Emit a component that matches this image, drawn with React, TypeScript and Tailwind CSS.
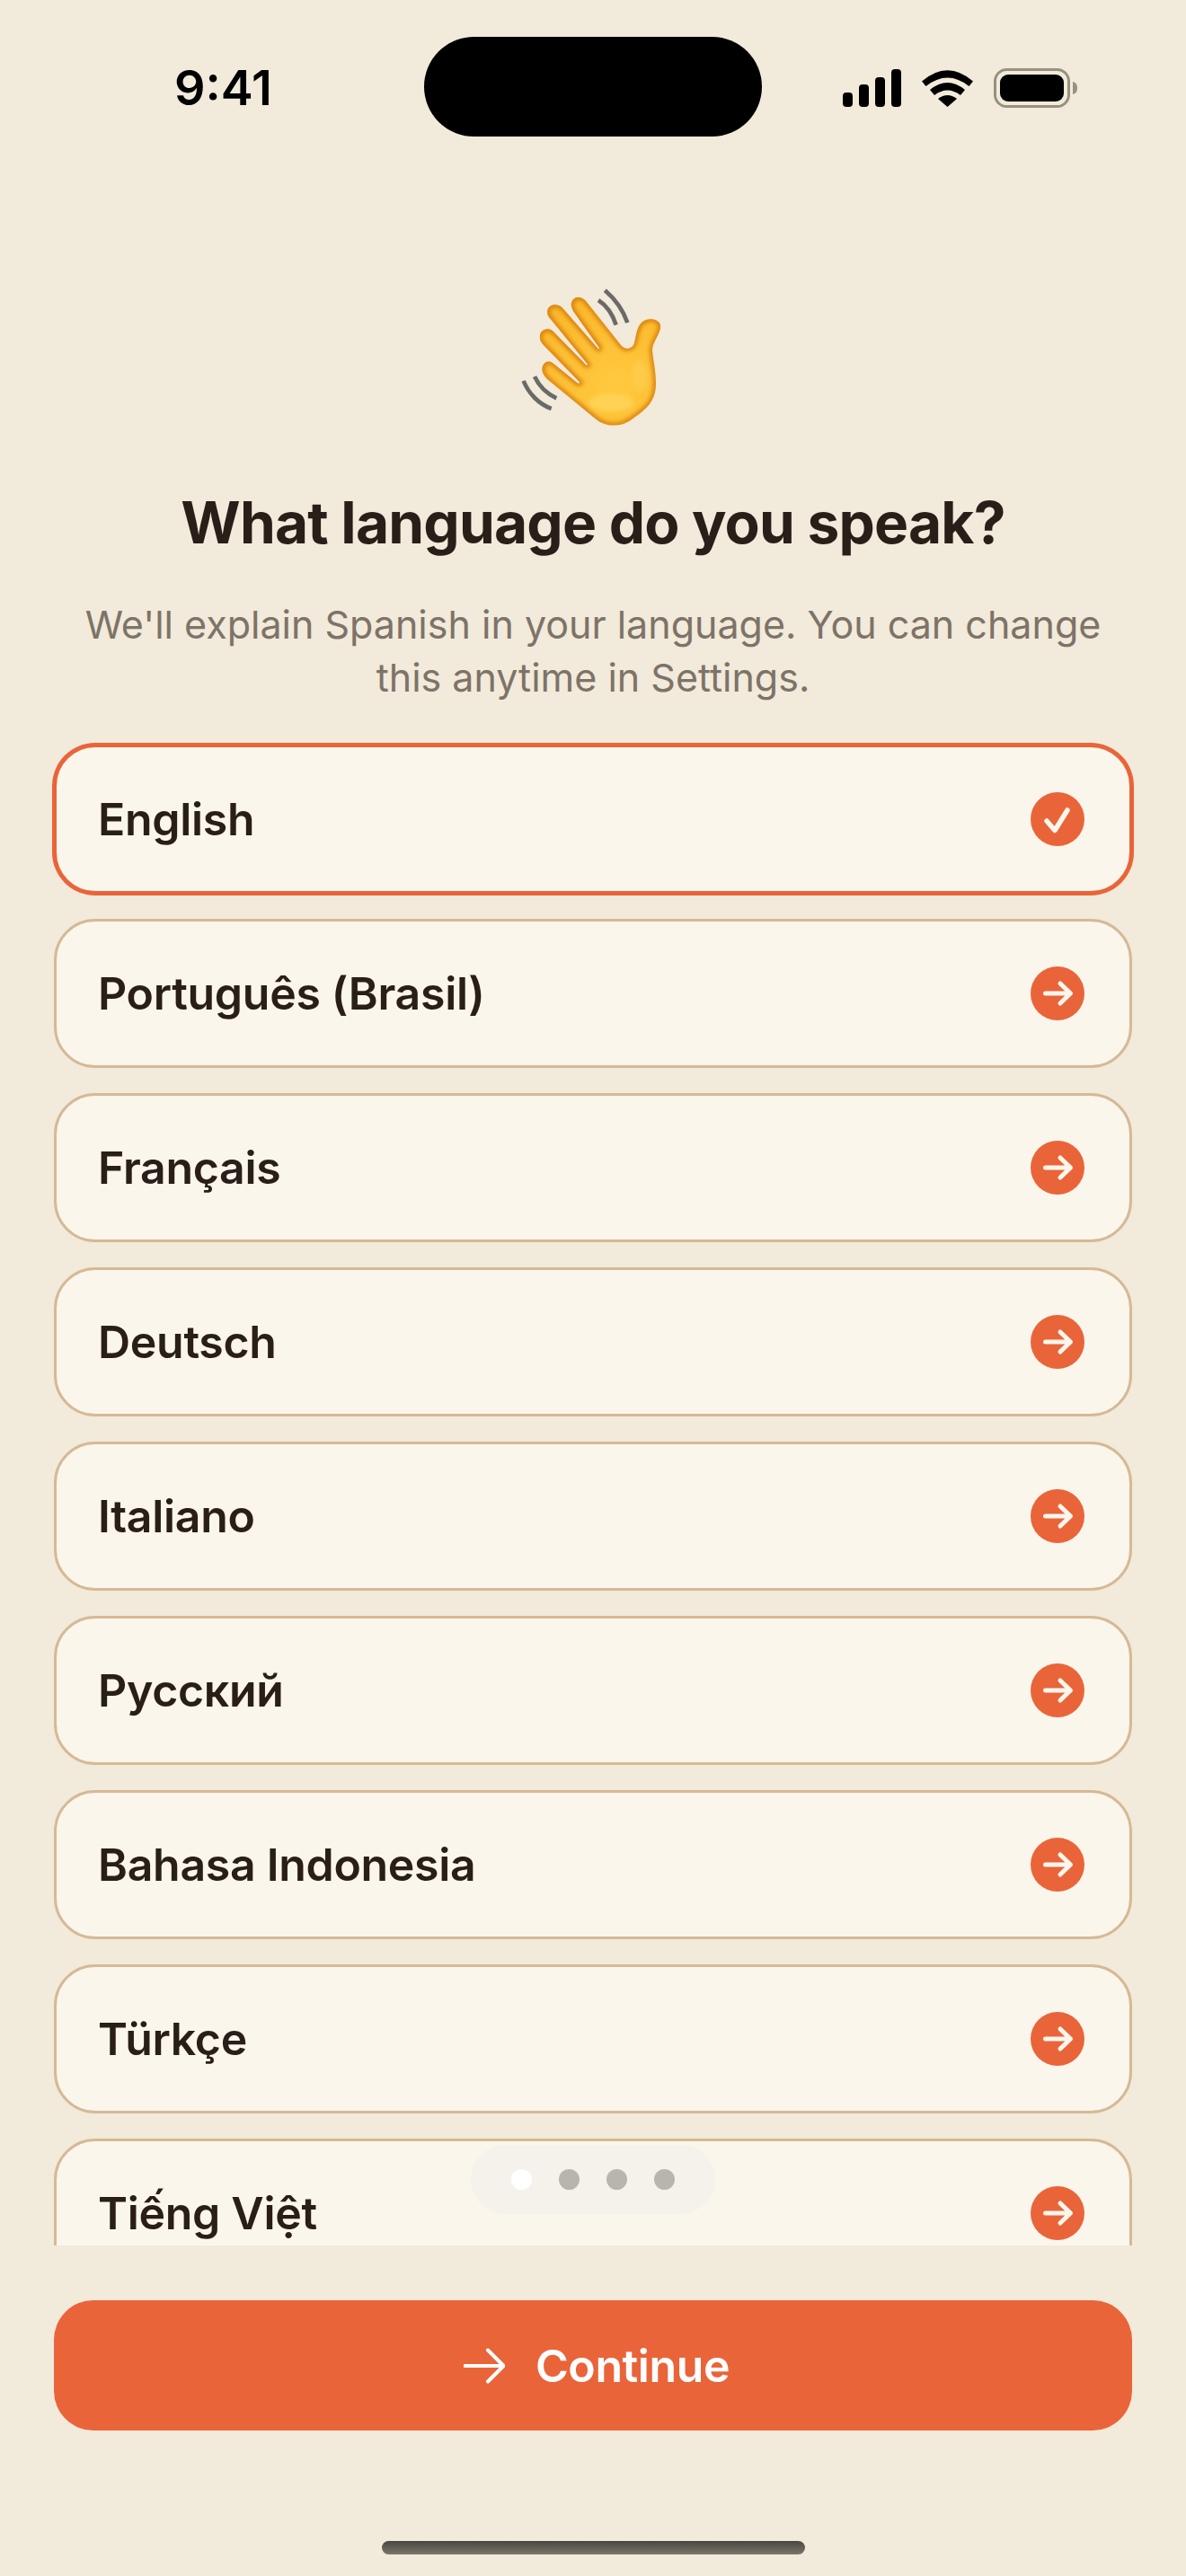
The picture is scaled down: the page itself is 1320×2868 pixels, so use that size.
import {FC} from 'react';

const languages = [
  'English',
  'Português (Brasil)',
  'Français',
  'Deutsch',
  'Italiano',
  'Русский',
  'Bahasa Indonesia',
  'Türkçe',
  'Tiếng Việt',
];

const handPath =
  'M585 215 C580 195 545 188 525 205 C505 222 505 250 498 275 C492 295 470 300 455 285 L340 140 C325 118 295 117 288 140 C285 152 290 165 300 178 L382 293 L378 296 L258 158 C245 143 215 143 208 165 C205 180 212 190 222 200 L343 348 L338 350 L225 235 C205 220 182 235 182 255 C182 270 192 280 200 288 L317 408 L310 411 L225 342 C205 330 190 345 190 365 C192 380 200 390 215 403 L370 530 C400 555 450 560 490 530 C540 495 570 470 570 410 C570 370 560 330 558 300 C558 270 590 240 585 215 Z';

const StatusIcons: FC = () => (
  <svg className="h-[46px] w-[264px]" viewBox="0 0 264 46" fill="none">
    {/* signal */}
    <rect x="0" y="27" width="11" height="16" rx="4" fill="#000" />
    <rect x="18" y="18" width="11" height="25" rx="4" fill="#000" />
    <rect x="36" y="10" width="11" height="33" rx="4" fill="#000" />
    <rect x="54" y="1" width="11" height="42" rx="4" fill="#000" />
    {/* wifi */}
    <path d="M88 14.500 L92.500 20 Q116.500 1 140.500 20 L145 14.500 Q116.500 -10 88 14.500 Z" fill="#000" />
    <path d="M97 24 L102 30 Q116.500 19 131 30 L136 24 Q116.500 8 97 24 Z" fill="#000" />
    <path d="M106 34 L116.500 43 L127 34 Q116.500 26 106 34 Z" fill="#000" />
    {/* battery */}
    <rect x="169.500" y="1.500" width="82" height="41" rx="13" stroke="#97917F" strokeWidth="3" />
    <rect x="175" y="7" width="71" height="30" rx="9" fill="#000" />
    <path d="M256 15 C260 16 261 19 261 22 C261 25 260 28 256 29 Z" fill="#97917F" />
  </svg>
);

const WaveEmoji: FC = () => (
  <svg className="h-[200px] w-[240px]" viewBox="0 0 720 600" fill="none">
    <defs>
      <radialGradient id="hand" cx="60%" cy="68%" r="70%">
        <stop offset="0%" stopColor="#FFC93F" />
        <stop offset="60%" stopColor="#FBBA2E" />
        <stop offset="100%" stopColor="#F3A722" />
      </radialGradient>
      <filter id="soft" x="-20%" y="-20%" width="140%" height="140%">
        <feGaussianBlur stdDeviation="8" />
      </filter>
      <clipPath id="handClip">
        <path d={handPath} />
      </clipPath>
    </defs>
    <g clipPath="url(#handClip)">
      <rect width="720" height="600" fill="url(#hand)" />
      <g filter="url(#soft)">
        <path d={handPath} stroke="#D67A08" strokeWidth="16" />
        <ellipse cx="420" cy="475" rx="75" ry="30" fill="#FFD255" />
        <ellipse cx="515" cy="385" rx="26" ry="50" fill="#FFCB4A" />
      </g>
    </g>
    <g stroke="#6A6A68" strokeWidth="14">
      <path d="M378 133 C405 150 425 180 437 215" />
      <path d="M400 100 C435 130 460 165 475 208" />
      <path d="M165 388 C180 420 205 445 238 460" />
      <path d="M128 402 C145 445 180 480 221 495" />
    </g>
  </svg>
);

const CheckBadge: FC = () => (
  <svg className="h-[60px] w-[60px] shrink-0" viewBox="0 0 60 60" fill="none">
    <circle cx="30" cy="30" r="30" fill="#EA643A" />
    <path d="M18 32 L27 42.500 L41 20" stroke="#FBF6EC" strokeWidth="5.500" strokeLinecap="round" strokeLinejoin="round" />
  </svg>
);

const ArrowBadge: FC = () => (
  <svg className="h-[60px] w-[60px] shrink-0" viewBox="0 0 60 60" fill="none">
    <circle cx="30" cy="30" r="30" fill="#EA643A" />
    <path d="M16.500 30 H44 M33 19 L44.500 30 L33 41" stroke="#FBF6EC" strokeWidth="5" strokeLinecap="round" strokeLinejoin="round" />
  </svg>
);

export default function App() {
  return (
    <div className="relative flex h-[2868px] w-[1320px] flex-col overflow-hidden bg-[#F2EADA] font-['Inter',sans-serif]">
      <div className="flex h-[152px] items-center pl-[194px] pr-[118px] pt-[41px]">
        <span className="translate-y-[1px] text-[54px] font-semibold leading-none text-black">9:41</span>
        <div className="ml-[169px] h-[111px] w-[376px] rounded-[56px] bg-black" />
        <div className="ml-auto translate-y-[2px]">
          <StatusIcons />
        </div>
      </div>

      <div className="mt-[138px] flex justify-center">
        <WaveEmoji />
      </div>

      <h1 className="mt-[54px] text-center text-[64px] font-bold leading-[76px] tracking-[-0.8px] text-[#2A1E18]">
        What language do you speak?
      </h1>
      <p className="mt-[46px] text-center text-[43px] leading-[59px] text-[#7D7368]">
        We'll explain Spanish in your language. You can change
        <br />
        this anytime in Settings.
      </p>

      <div className="mx-[56px] mt-[25px] flex h-[1691px] flex-col gap-[28px] overflow-hidden px-[4px] pt-[20px]">
        {languages.map((name, i) => (
          <div
            key={name}
            className={
              i === 0
                ? 'flex h-[166px] shrink-0 items-center justify-between rounded-[46px] border-[3px] border-[#EA643A] bg-[#FBF6EC] pl-[46px] pr-[50px] shadow-[0_0_0_2px_#EA643A]'
                : 'flex h-[166px] shrink-0 items-center justify-between rounded-[46px] border-[3px] border-[#D6B995] bg-[#FBF6EC] pl-[46px] pr-[50px]'
            }>
            <span className="text-[50px] font-semibold leading-none tracking-[-0.3px] text-[#2A1E18]">{name}</span>
            {i === 0 ? <CheckBadge /> : <ArrowBadge />}
          </div>
        ))}
      </div>

      <button className="mx-[60px] mt-[61px] flex h-[145px] items-center justify-center gap-[34px] rounded-[44px] bg-[#EA643A] pl-[8px]">
        <svg className="h-[40px] w-[46px]" viewBox="0 0 46 40" fill="none">
          <path d="M1.500 20 H44 M27 2.500 L44.500 20 L27 37.500" stroke="#fff" strokeWidth="4" strokeLinecap="round" strokeLinejoin="round" />
        </svg>
        <span className="text-[50px] font-semibold leading-none tracking-[-0.4px] text-white">Continue</span>
      </button>

      <div className="mx-auto mt-[123px] h-[15px] w-[471px] rounded-full bg-gradient-to-b from-[#4A4740] to-[#7A766C]" />

      <div className="absolute left-[524px] top-[2388px] flex h-[77px] w-[272px] items-center justify-center gap-[30px] rounded-[38px] bg-[#F5F2EC]">
        <span className="h-[23px] w-[23px] rounded-full bg-white" />
        <span className="h-[23px] w-[23px] rounded-full bg-[#B7B5AE]" />
        <span className="h-[23px] w-[23px] rounded-full bg-[#B7B5AE]" />
        <span className="h-[23px] w-[23px] rounded-full bg-[#B7B5AE]" />
      </div>
    </div>
  );
}
